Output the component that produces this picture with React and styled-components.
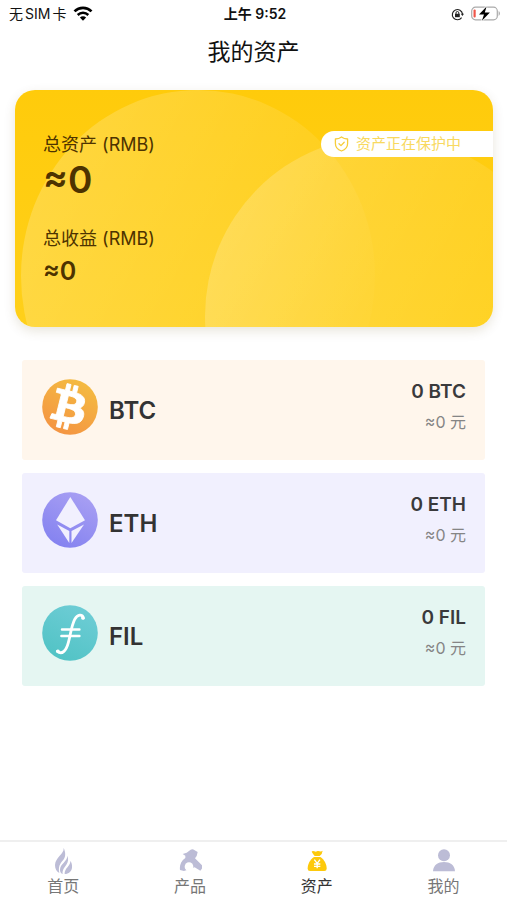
import styled, { createGlobalStyle, css } from "styled-components";

const GlobalStyle = createGlobalStyle`
  * {
    box-sizing: border-box;
    margin: 0;
    padding: 0;
  }

  body {
    background-color: #fff;
    color: #111;
    font-family: Inter, "Noto Sans CJK SC", sans-serif;
  }
`;

const Page = styled.div`
  display: flex;
  flex-direction: column;
  min-height: 100vh;
`;

const StatusBar = styled.div`
  display: grid;
  grid-template-columns: 1fr auto 1fr;
  align-items: center;
  height: 28px;
  padding: 0 6px 0 9px;
  font-size: 14px;
  line-height: 20px;
`;

const StatusGroup = styled.div`
  display: flex;
  align-items: center;
  gap: ${(props) => props.$gap};
  justify-content: ${(props) => props.$justify || "flex-start"};
`;

const Time = styled.time`
  font-weight: 600;
`;

const Title = styled.h1`
  font-size: 23px;
  font-weight: 400;
  line-height: 32px;
  padding: 8px 0;
  text-align: center;
`;

const Main = styled.main`
  flex: 1;
  padding: 14px 14px 24px 15px;
`;

const Card = styled.section`
  position: relative;
  overflow: hidden;
  height: 237px;
  padding: 42px 28px;
  border-radius: 20px;
  background: linear-gradient(180deg, #ffcb0b, #ffd01a);
  color: #4d3300;
`;

const CardShadow = styled.div`
  border-radius: 20px;
  box-shadow: 0 4px 12px rgba(90, 70, 0, 0.14);
`;

const Ring = styled.span`
  position: absolute;
  width: ${(props) => props.$width};
  height: ${(props) => props.$height};
  border-radius: 50%;
  left: ${(props) => props.$left};
  top: ${(props) => props.$top};
  background: linear-gradient(
    115deg,
    rgba(255, 255, 255, 0.2) 10%,
    rgba(255, 255, 255, 0.02) 85%
  );
`;

const Totals = styled.dl`
  position: relative;
`;

const Label = styled.dt`
  font-size: 18px;
  line-height: 26px;
`;

const Amount = styled.dd`
  font-weight: 600;

  ${(props) =>
    props.$size === "large"
      ? css`
          font-size: 37px;
          line-height: 44px;
          margin-bottom: 24px;
        `
      : css`
          font-size: 25px;
          line-height: 38px;
        `}
`;

const Protected = styled.div`
  position: absolute;
  top: 41px;
  right: 0;
  display: flex;
  align-items: center;
  gap: 7px;
  height: 26px;
  padding: 0 32px 0 13px;
  border-radius: 13px 0 0 13px;
  background-color: #fff;
  color: #f8d960;
  font-size: 15px;
  line-height: 24px;
`;

const CoinList = styled.ul`
  display: grid;
  gap: 13px;
  margin-top: 33px;
  padding: 0 8px 0 7px;
  list-style: none;
`;

const CoinRow = styled.li`
  display: flex;
  align-items: flex-start;
  height: 100px;
  padding: 19px 19px 0 20px;
  border-radius: 3px;
  background-color: ${(props) => props.$color};
`;

const CoinName = styled.h2`
  margin-left: 11px;
  color: #333;
  font-size: 24px;
  font-weight: 600;
  line-height: 64px;
`;

const Balance = styled.div`
  margin-left: auto;
  text-align: right;
`;

const Quantity = styled.p`
  color: #3a3a3c;
  font-size: 19px;
  font-weight: 600;
  line-height: 26px;
`;

const Worth = styled.p`
  margin-top: 4px;
  color: #858585;
  font-size: 16px;
  line-height: 26px;
`;

const TabBar = styled.nav`
  position: sticky;
  bottom: 0;
  display: grid;
  grid-template-columns: repeat(4, 1fr);
  height: 60px;
  border-top: 2px solid #efefef;
  background-color: #fff;
`;

const Tab = styled.a`
  display: flex;
  flex-direction: column;
  align-items: center;
  padding-top: 4px;
  color: ${(props) => (props.$active ? "#333" : "#777")};
  font-size: 16px;
  line-height: 24px;
  text-decoration: none;

  svg {
    fill: ${(props) => (props.$active ? "#fdc90c" : "#bcbcd6")};
  }
`;

function WifiIcon() {
  return (
    <svg width="20" height="16" viewBox="0 0 20 16" fill="none" stroke="#000">
      <path d="M1.5 5.4a12.2 12.2 0 0 1 17 0" strokeWidth="2.7" />
      <path d="M4.7 9a7.6 7.6 0 0 1 10.6 0" strokeWidth="2.5" />
      <path
        d="M10 14.8 6.9 11.5a4.4 4.4 0 0 1 6.2 0Z"
        fill="#000"
        stroke="none"
      />
    </svg>
  );
}

function RotationLockIcon() {
  return (
    <svg width="13" height="13" viewBox="0 0 13 13" fill="none" stroke="#222">
      <path d="M10.6 9.6A5.1 5.1 0 1 1 11.5 6" strokeWidth="1.2" />
      <path d="M9.8 5.7h3.2l-1.6 2.2Z" fill="#222" stroke="none" />
      <rect x="4" y="5.8" width="4.8" height="3.4" fill="#222" stroke="none" />
      <path d="M5 6V4.9a1.4 1.4 0 0 1 2.8 0V6" strokeWidth="1" />
    </svg>
  );
}

function BatteryIcon() {
  return (
    <svg width="30" height="16" viewBox="0 0 30 16" fill="none">
      <rect
        x="0.7"
        y="1.2"
        width="25.6"
        height="12.6"
        rx="3.8"
        stroke="#aaa"
        strokeWidth="1.2"
      />
      <path d="M27.6 5.1c1.8.8 1.8 4 0 4.8Z" fill="#aaa" />
      <rect x="2.5" y="3.5" width="2.2" height="8" rx="1" fill="#f0564a" />
      <path
        d="M15.6.5 8 8.5h5l-2.100 6.200L18.900 6.500h-5.100Z"
        fill="#000"
        stroke="#fff"
        strokeWidth="1.6"
        paintOrder="stroke"
      />
    </svg>
  );
}

function ShieldIcon() {
  return (
    <svg
      width="15"
      height="16"
      viewBox="0 0 15 16"
      fill="none"
      stroke="#f6cd3a"
      strokeWidth="1.3"
      strokeLinejoin="round"
      strokeLinecap="round"
    >
      <path d="M7.5 1 C5.8 2.4 3.6 3 1.4 3 V7.5 C1.4 11.2 4 13.8 7.5 15 C11 13.8 13.6 11.2 13.6 7.5 V3 C11.4 3 9.2 2.4 7.5 1Z" />
      <path d="m5 7.7 2 1.9 3.2-3.3" />
    </svg>
  );
}

function CoinIcon({ id, from, to, children }) {
  return (
    <svg width="56" height="56" viewBox="0 0 56 56" aria-hidden="true">
      <defs>
        <linearGradient id={id} x1="0.8" y1="0" x2="0.3" y2="1">
          <stop offset="0" stopColor={from} />
          <stop offset="1" stopColor={to} />
        </linearGradient>
      </defs>
      <circle cx="28" cy="28" r="27.8" fill={`url(#${id})`} />
      {children}
    </svg>
  );
}

function BtcIcon() {
  return (
    <CoinIcon id="btc" from="#f4bd41" to="#f49443">
      <path
        transform="translate(-10.8 -9.2) scale(2.3)"
        fill="#fff"
        stroke="#fff"
        strokeWidth="0.4"
        d="M23.189 14.02c.314-2.096-1.283-3.223-3.465-3.975l.708-2.84-1.728-.43-.69 2.765c-.454-.114-.92-.22-1.385-.326l.695-2.783L15.596 6l-.708 2.839c-.376-.086-.746-.17-1.104-.26l.002-.009-2.384-.595-.46 1.846s1.283.294 1.256.312c.7.175.826.638.805 1.006l-.806 3.235c.048.012.11.03.18.057l-.183-.045-1.13 4.532c-.086.212-.303.531-.793.41.018.025-1.256-.313-1.256-.313l-.858 1.978 2.25.561c.418.105.828.215 1.231.318l-.715 2.872 1.727.43.708-2.84c.472.127.93.245 1.378.357l-.706 2.828 1.728.43.715-2.866c2.948.558 5.164.333 6.097-2.333.752-2.146-.037-3.385-1.588-4.192 1.13-.26 1.98-1.003 2.207-2.538zm-3.95 5.538c-.533 2.147-4.148.986-5.32.695l.95-3.805c1.172.293 4.929.872 4.37 3.11zm.535-5.569c-.487 1.953-3.495.96-4.47.717l.86-3.45c.975.243 4.118.696 3.61 2.733z"
      />
    </CoinIcon>
  );
}

function EthIcon() {
  return (
    <CoinIcon id="eth" from="#a9a0f3" to="#8482f0">
      <g fill="#f1f0fe">
        <path d="M28.3 5 14 28.2l14.3 8 14.7-8Z" />
        <path d="M15.2 32.4 27.3 39v12Z" />
        <path d="M42 32.4 29.5 39v12Z" />
      </g>
    </CoinIcon>
  );
}

function FilIcon() {
  return (
    <CoinIcon id="fil" from="#6fcdd6" to="#51c3c5">
      <g fill="none" stroke="#fff" strokeLinecap="round">
        <path
          d="M41.5 13.2C40.5 9 35.5 9 32.7 14.4C29.5 20.6 28.6 29 26.4 37.4C24.4 45.2 20 50.6 15.3 46.2"
          strokeWidth="2.8"
        />
        <path d="M20 24.4H37.4M19.4 31H37.4" strokeWidth="2.5" />
      </g>
      <circle cx="40.8" cy="13" r="1.8" fill="#fff" />
      <circle cx="16" cy="46.4" r="1.8" fill="#fff" />
    </CoinIcon>
  );
}

function TabIcon({ children }) {
  return (
    <svg width="24" height="28" viewBox="0 0 72 84" aria-hidden="true">
      {children}
    </svg>
  );
}

function FlameIcon() {
  return (
    <TabIcon>
      <path d="M38 6C40 24 13 34 12 57C12 69 17 77 25 81C21 63 27 53 36 43C45 33 44 18 38 6Z" />
      <path d="M49 29C50 46 27 53 27 71C27 77 30 82 35 84C33 71 41 64 46 56C52 47 53 38 49 29Z" />
      <path d="M58 45C59 60 40 66 41 84C53 84 62 75 63 65C64 57 62 50 58 45Z" />
    </TabIcon>
  );
}

function MinerIcon() {
  return (
    <TabIcon>
      <path d="M14 24 26 20 38 11Q44 8 50 13L59 18 56 30 51 37 76 62 67 74 50 64 18 75 6 72C4 58 9 45 22 36L22 29Z" />
      <circle cx="33" cy="62" r="13" fill="#fff" />
    </TabIcon>
  );
}

function MoneyBagIcon() {
  return (
    <TabIcon>
      <path d="M20 17C25 12 30 20 36 16C42 12 46 20 53 14Q52 24 44 30H29Q24 24 20 17Z" />
      <path d="M27 33H46C58 41 65 54 65 68Q65 75 58 75H15Q8 75 8 68C8 54 15 41 27 33Z" />
      <path
        d="M28 41 36.5 52 45 41M36.5 52V67M27 54H46M27 61H46"
        fill="none"
        stroke="#fff"
        strokeWidth="4"
      />
    </TabIcon>
  );
}

function PersonIcon() {
  return (
    <TabIcon>
      <circle cx="36" cy="28" r="18" />
      <path d="M3 76C4 57 18 48 36 48S68 57 69 76Z" />
    </TabIcon>
  );
}

const coins = [
  { name: "BTC", color: "#fff6ec", Icon: BtcIcon },
  { name: "ETH", color: "#f1f0fe", Icon: EthIcon },
  { name: "FIL", color: "#e5f6f2", Icon: FilIcon },
];

const tabs = [
  { label: "首页", href: "#home", Icon: FlameIcon },
  { label: "产品", href: "#products", Icon: MinerIcon },
  { label: "资产", href: "#assets", Icon: MoneyBagIcon, active: true },
  { label: "我的", href: "#me", Icon: PersonIcon },
];

function AssetCard() {
  return (
    <CardShadow>
      <Card>
        <Ring $left="6px" $top="0" $width="354px" $height="372px" />
        <Ring $left="190px" $top="46px" $width="360px" $height="360px" />
        <Totals>
          <Label>总资产 (RMB)</Label>
          <Amount $size="large">≈0</Amount>
          <Label>总收益 (RMB)</Label>
          <Amount>≈0</Amount>
        </Totals>
        <Protected>
          <ShieldIcon />
          <span>资产正在保护中</span>
        </Protected>
      </Card>
    </CardShadow>
  );
}

function App() {
  return (
    <>
      <GlobalStyle />
      <Page>
        <StatusBar>
          <StatusGroup $gap="7px">
            <StatusGroup as="span" $gap="2px">
              <span>无</span>
              <span>SIM</span>
              <span>卡</span>
            </StatusGroup>
            <WifiIcon />
          </StatusGroup>
          <Time>上午 9:52</Time>
          <StatusGroup $gap="7px" $justify="flex-end">
            <RotationLockIcon />
            <BatteryIcon />
          </StatusGroup>
        </StatusBar>
        <Title>我的资产</Title>
        <Main>
          <AssetCard />
          <CoinList>
            {coins.map(({ name, color, Icon }) => (
              <CoinRow key={name} $color={color}>
                <Icon />
                <CoinName>{name}</CoinName>
                <Balance>
                  <Quantity>0 {name}</Quantity>
                  <Worth>≈0 元</Worth>
                </Balance>
              </CoinRow>
            ))}
          </CoinList>
        </Main>
        <TabBar>
          {tabs.map(({ label, href, Icon, active }) => (
            <Tab
              key={label}
              href={href}
              $active={active}
              aria-current={active ? "page" : undefined}
            >
              <Icon />
              {label}
            </Tab>
          ))}
        </TabBar>
      </Page>
    </>
  );
}

export default App;
